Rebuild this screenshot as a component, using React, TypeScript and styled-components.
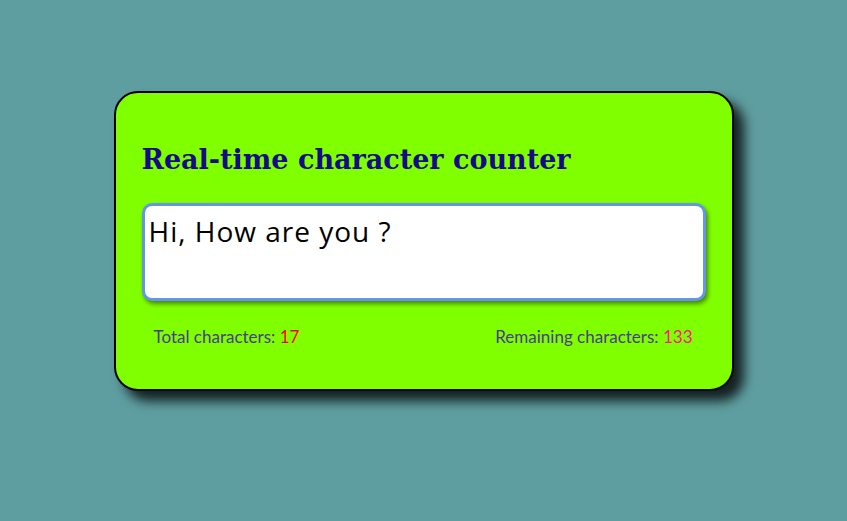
import { useState } from "react";
import styled, { createGlobalStyle } from "styled-components";

const MAX = 150;

const GlobalStyle = createGlobalStyle`
  html, body {
    margin: 0;
    padding: 0;
    background: #5f9ea0;
  }
`;

const Page = styled.div`
  min-height: 100vh;
  box-sizing: border-box;
  display: flex;
  justify-content: center;
  align-items: flex-start;
  padding-top: 91px;
`;

const Card = styled.div`
  width: 564px;
  padding: 49px 26px 42px 26px;
  background: #7fff00;
  border: 2px solid #000;
  border-radius: 24px;
  box-shadow: 10px 10px 12px rgba(0, 0, 0, 0.8);
`;

const Title = styled.h2`
  margin: 0 0 25px 0;
  font-family: "DejaVu Serif", "Liberation Serif", serif;
  font-weight: bold;
  font-size: 27px;
  line-height: 36px;
  color: #150a87;
`;

const TextBox = styled.textarea`
  display: block;
  box-sizing: border-box;
  width: 100%;
  height: 98px;
  padding: 9px 4px;
  resize: none;
  border: 3px solid #6495ed;
  border-radius: 10px;
  box-shadow: 2px 3px 4px rgba(0, 0, 0, 0.45);
  font-family: "Open Sans", "DejaVu Sans", sans-serif;
  font-size: 28px;
  line-height: 32px;
  letter-spacing: 1px;
  color: #000;
  outline: none;
`;

const Footer = styled.div`
  display: flex;
  justify-content: space-between;
  padding: 26px 13px 0 12px;
  font-family: "Lato", "Open Sans", sans-serif;
  font-size: 17px;
  line-height: 20px;
  color: #483d8b;
`;

const Count = styled.span<{ $tone: string }>`
  color: ${(p) => p.$tone};
`;

export default function App() {
  const [text, setText] = useState("Hi, How are you ?");

  return (
    <>
      <GlobalStyle />
      <Page>
        <Card>
          <Title>Real-time character counter</Title>
          <TextBox
            value={text}
            maxLength={MAX}
            onChange={(e) => setText(e.target.value)}
          />
          <Footer>
            <span>
              Total characters: <Count $tone="#ff0000">{text.length}</Count>
            </span>
            <span>
              Remaining characters:{" "}
              <Count $tone="#ff1493">{MAX - text.length}</Count>
            </span>
          </Footer>
        </Card>
      </Page>
    </>
  );
}
